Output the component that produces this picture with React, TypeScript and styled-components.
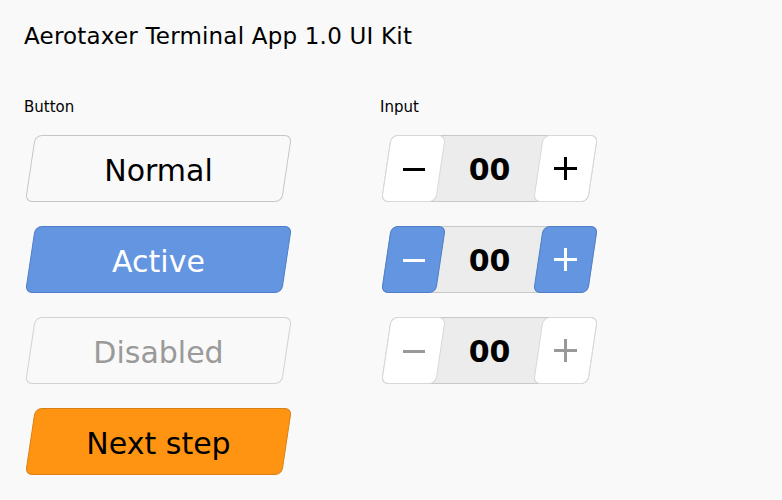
import React from "react";
import styled, { createGlobalStyle, css } from "styled-components";

const GlobalStyle = createGlobalStyle`
  html, body { margin: 0; padding: 0; background: #f9f9f9; }
  body { font-family: "DejaVu Sans", Verdana, sans-serif; color: #000; }
`;

const Page = styled.div`
  padding: 23px 24px;
`;

const Title = styled.h1`
  margin: 0;
  font-size: 23px;
  line-height: 26px;
  letter-spacing: 0.2px;
  font-weight: normal;
`;

const Columns = styled.div`
  display: grid;
  grid-template-columns: 356px 1fr;
  margin-top: 49px;
`;

const Column = styled.section`
  display: flex;
  flex-direction: column;
`;

const Label = styled.h2`
  margin: 0 0 19px;
  font-size: 15px;
  line-height: 18px;
  font-weight: normal;
`;

const Stack = styled.div`
  display: flex;
  flex-direction: column;
  gap: 24px;
`;

type Variant = "normal" | "active" | "disabled" | "primary";

const palette: Record<Variant, { bg: string; border: string; color: string }> = {
  normal: { bg: "#f9f9f9", border: "#c6c6c6", color: "#000" },
  active: { bg: "#6495e0", border: "#4f7fc6", color: "#fff" },
  disabled: { bg: "#f9f9f9", border: "#d2d2d2", color: "#9a9a9a" },
  primary: { bg: "#ff9412", border: "#d98015", color: "#000" },
};

const skewShape = (bg: string, border: string) => css`
  &::before {
    content: "";
    position: absolute;
    inset: 0;
    transform: skewX(-8.5deg);
    background: ${bg};
    border: 1px solid ${border};
    border-radius: 7px;
    z-index: -1;
  }
`;

const SkewButton = styled.button<{ $variant: Variant }>`
  position: relative;
  isolation: isolate;
  display: flex;
  align-items: center;
  justify-content: center;
  width: 257px;
  height: 67px;
  margin-left: 6px;
  padding: 3px 0 0;
  border: none;
  background: none;
  font-family: "DejaVu Sans", Verdana, sans-serif;
  font-size: 30px;
  color: ${(p) => palette[p.$variant].color};
  cursor: ${(p) => (p.$variant === "disabled" ? "default" : "pointer")};
  ${(p) => skewShape(palette[p.$variant].bg, palette[p.$variant].border)}
`;

const Stepper = styled.div`
  position: relative;
  isolation: isolate;
  display: flex;
  width: 207px;
  height: 67px;
  margin-left: 6px;
  ${skewShape("#ececec", "#c9c9c9")}
`;

type StepVariant = "normal" | "active" | "disabled";

const stepPalette: Record<StepVariant, { bg: string; border: string; color: string }> = {
  normal: { bg: "#ffffff", border: "#d8d8d8", color: "#000" },
  active: { bg: "#6495e0", border: "#4f7fc6", color: "#fff" },
  disabled: { bg: "#ffffff", border: "#d8d8d8", color: "#999" },
};

const StepButton = styled.button<{ $variant: StepVariant }>`
  position: relative;
  isolation: isolate;
  display: flex;
  align-items: center;
  justify-content: center;
  flex: 0 0 55px;
  height: 67px;
  padding: 0;
  border: none;
  background: none;
  color: ${(p) => stepPalette[p.$variant].color};
  ${(p) => skewShape(stepPalette[p.$variant].bg, stepPalette[p.$variant].border)}
`;

const Value = styled.div`
  flex: 1;
  display: flex;
  align-items: center;
  justify-content: center;
  padding-top: 2px;
  font-size: 30px;
  font-weight: bold;
`;

const MinusIcon = () => (
  <svg width="22" height="22" viewBox="0 0 22 22" aria-hidden="true">
    <path d="M0 11.5H22" stroke="currentColor" strokeWidth="3" />
  </svg>
);

const PlusIcon = () => (
  <svg width="23" height="23" viewBox="0 0 23 23" aria-hidden="true">
    <path d="M0 11.5H23M11.5 0V23" stroke="currentColor" strokeWidth="3" />
  </svg>
);

const buttons: { label: string; variant: Variant }[] = [
  { label: "Normal", variant: "normal" },
  { label: "Active", variant: "active" },
  { label: "Disabled", variant: "disabled" },
  { label: "Next step", variant: "primary" },
];

const steppers: StepVariant[] = ["normal", "active", "disabled"];

export default function App() {
  return (
    <>
      <GlobalStyle />
      <Page>
        <Title>Aerotaxer Terminal App 1.0 UI Kit</Title>
        <Columns>
          <Column>
            <Label>Button</Label>
            <Stack>
              {buttons.map((b) => (
                <SkewButton key={b.label} $variant={b.variant} disabled={b.variant === "disabled"}>
                  {b.label}
                </SkewButton>
              ))}
            </Stack>
          </Column>
          <Column>
            <Label>Input</Label>
            <Stack>
              {steppers.map((v) => (
                <Stepper key={v}>
                  <StepButton $variant={v} disabled={v === "disabled"} aria-label="decrease">
                    <MinusIcon />
                  </StepButton>
                  <Value>00</Value>
                  <StepButton $variant={v} disabled={v === "disabled"} aria-label="increase">
                    <PlusIcon />
                  </StepButton>
                </Stepper>
              ))}
            </Stack>
          </Column>
        </Columns>
      </Page>
    </>
  );
}
